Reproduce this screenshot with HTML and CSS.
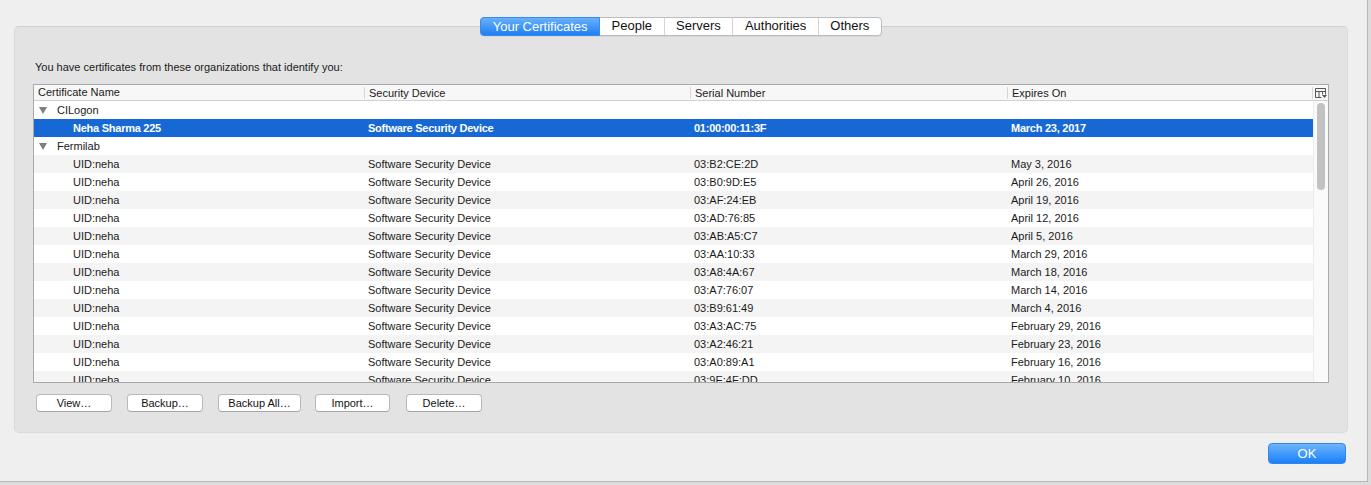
FILE: index.html
```html
<!DOCTYPE html>
<html>
<head>
<meta charset="utf-8">
<link rel="stylesheet" href="styles.css">
</head>
<body>
<div class="window">
  <div class="tabs">
    <div class="tab active">Your Certificates</div>
    <div class="tab">People</div>
    <div class="tab">Servers</div>
    <div class="tab">Authorities</div>
    <div class="tab">Others</div>
  </div>
  <div class="panel">
    <p class="intro">You have certificates from these organizations that identify you:</p>
    <div class="table">
      <div class="thead">
        <div class="th">Certificate Name</div>
        <div class="th sep">Security Device</div>
        <div class="th sep">Serial Number</div>
        <div class="th sep">Expires On</div>
        <div class="th-icon">
          <svg width="13" height="12" viewBox="0 0 13 12"><path d="M1.5 1.5h10v6M1.5 1.5v9h6M1.5 4.5h10M5 4.5v6M8.5 4.5v3" fill="none" stroke="#555" stroke-width="1"/><path d="M8 8h5l-2.5 3z" fill="#555"/></svg>
        </div>
      </div>
      <div class="tbody">
        <div class="rows">
          <div class="row group"><span class="tri"></span>CILogon</div>
          <div class="row selected"><div class="c1">Neha Sharma 225</div><div>Software Security Device</div><div>01:00:00:11:3F</div><div>March 23, 2017</div></div>
          <div class="row group"><span class="tri"></span>Fermilab</div>
          <div class="row"><div class="c1">UID:neha</div><div>Software Security Device</div><div>03:B2:CE:2D</div><div>May 3, 2016</div></div>
          <div class="row"><div class="c1">UID:neha</div><div>Software Security Device</div><div>03:B0:9D:E5</div><div>April 26, 2016</div></div>
          <div class="row"><div class="c1">UID:neha</div><div>Software Security Device</div><div>03:AF:24:EB</div><div>April 19, 2016</div></div>
          <div class="row"><div class="c1">UID:neha</div><div>Software Security Device</div><div>03:AD:76:85</div><div>April 12, 2016</div></div>
          <div class="row"><div class="c1">UID:neha</div><div>Software Security Device</div><div>03:AB:A5:C7</div><div>April 5, 2016</div></div>
          <div class="row"><div class="c1">UID:neha</div><div>Software Security Device</div><div>03:AA:10:33</div><div>March 29, 2016</div></div>
          <div class="row"><div class="c1">UID:neha</div><div>Software Security Device</div><div>03:A8:4A:67</div><div>March 18, 2016</div></div>
          <div class="row"><div class="c1">UID:neha</div><div>Software Security Device</div><div>03:A7:76:07</div><div>March 14, 2016</div></div>
          <div class="row"><div class="c1">UID:neha</div><div>Software Security Device</div><div>03:B9:61:49</div><div>March 4, 2016</div></div>
          <div class="row"><div class="c1">UID:neha</div><div>Software Security Device</div><div>03:A3:AC:75</div><div>February 29, 2016</div></div>
          <div class="row"><div class="c1">UID:neha</div><div>Software Security Device</div><div>03:A2:46:21</div><div>February 23, 2016</div></div>
          <div class="row"><div class="c1">UID:neha</div><div>Software Security Device</div><div>03:A0:89:A1</div><div>February 16, 2016</div></div>
          <div class="row"><div class="c1">UID:neha</div><div>Software Security Device</div><div>03:9E:4F:DD</div><div>February 10, 2016</div></div>
        </div>
        <div class="scrollbar"><div class="thumb"></div></div>
      </div>
    </div>
    <div class="buttons">
      <button class="btn w76">View…</button>
      <button class="btn w76">Backup…</button>
      <button class="btn w83">Backup All…</button>
      <button class="btn w76">Import…</button>
      <button class="btn w76">Delete…</button>
    </div>
  </div>
  <div class="footer">
    <button class="ok">OK</button>
  </div>
</div>
</body>
</html>
```
FILE: styles.css
```css
* { box-sizing: border-box; }
html, body { margin: 0; padding: 0; }
body {
  background: #dcdcdc;
  font-family: "Liberation Sans", Arial, sans-serif;
  color: #1a1a1a;
  width: 1371px;
  height: 485px;
  overflow: hidden;
}
.window {
  width: 1368px;
  height: 482px;
  background: #efefef;
  border-right: 1px solid #b8b8b8;
  border-bottom: 1px solid #b8b8b8;
  padding: 17px 19px 0 14px;
  display: flex;
  flex-direction: column;
}
.tabs {
  display: flex;
  align-self: center;
  height: 19px;
  position: relative;
  z-index: 1;
  border: 1px solid #bdbdbd;
  border-radius: 4px;
  background: #fff;
  box-shadow: 0 1px 0 rgba(0,0,0,0.05);
}
.tab {
  font-size: 13px;
  line-height: 16px;
  padding: 0 11.5px;
  color: #111;
  border-left: 1px solid #d4d4d4;
}
.tab:first-child { border-left: none; }
.tab.active {
  background: linear-gradient(#68b1fb, #1f80f4);
  color: #fff;
  margin: -1px 0 -1px -1px;
  padding: 1px 11.5px 0 11.5px;
  border-radius: 4px 0 0 4px;
  line-height: 16px;
  height: 19px;
  border: 1px solid #3a89ee;
}
.tab.active + .tab { border-left: none; }
.panel {
  margin-top: -10px;
  height: 407px;
  background: #e3e3e3;
  border: 1px solid #dadada;
  border-top-color: #cfcfcf;
  border-radius: 5px;
  padding: 0 18px 0 18px;
  display: flex;
  flex-direction: column;
}
.intro {
  margin: 33px 0 0 2px;
  font-size: 11px;
  line-height: 14px;
  height: 14px;
}
.table {
  margin-top: 10px;
  height: 299px;
  border: 1px solid #a9a9a9;
  background: #fff;
  display: flex;
  flex-direction: column;
  font-size: 11px;
}
.thead {
  height: 16px;
  flex: none;
  display: grid;
  grid-template-columns: 330px 326px 317px 1fr 16px;
  border-bottom: 1px solid #d0d0d0;
  background: #f7f7f7;
  line-height: 15px;
}
.th { padding-left: 4px; position: relative; }
.th.sep { border-left: 1px solid #d6d6d6; margin: 2px 0 1px; line-height: 12px; padding-left: 4px; }
.th:first-child { line-height: 15px; }
.th-icon { display: flex; align-items: center; justify-content: center; border-left: 1px solid #d6d6d6; margin: 2px 0 1px; }
.tbody {
  flex: 1;
  display: flex;
  overflow: hidden;
}
.rows { flex: 1; overflow: hidden; }
.row {
  height: 18px;
  line-height: 18px;
  display: grid;
  grid-template-columns: 330px 326px 317px 1fr;
  white-space: nowrap;
}
.row > div { padding-left: 4px; }
.row > .c1 { padding-left: 39px; }
.row:nth-child(even) { background: #f4f4f4; }
.row.group { display: flex; align-items: center; padding-left: 5px; }
.tri {
  width: 0; height: 0;
  border-left: 4px solid transparent;
  border-right: 4px solid transparent;
  border-top: 7px solid #7e7e7e;
  margin-right: 10px;
}
.row.selected {
  background: #1669d5;
  color: #fff;
  font-weight: bold;
  letter-spacing: -0.25px;
}
.scrollbar {
  width: 15px;
  flex: none;
  background: #fafafa;
  border-left: 1px solid #ececec;
  padding: 2px 3px;
}
.thumb {
  width: 8px;
  height: 87px;
  border-radius: 4px;
  background: #c2c2c2;
}
.buttons {
  display: flex;
  margin-top: 11px;
  padding-left: 3px;
}
.btn {
  font-family: "Liberation Sans", Arial, sans-serif;
  font-size: 11px;
  height: 18px;
  line-height: 15px;
  padding: 0;
  background: #fff;
  border: 1px solid #b9b9b9;
  border-bottom-color: #a6a6a6;
  border-radius: 4px;
  color: #111;
  margin-right: 15px;
}
.btn.w76 { width: 76px; }
.btn.w83 { width: 83px; }
.btn:nth-child(4) { width: 75px; margin-right: 16px; }
.btn:nth-child(3) { margin-right: 14px; }
.footer {
  display: flex;
  justify-content: flex-end;
  margin-top: 10px;
  padding-right: 2px;
}
.ok {
  font-family: "Liberation Sans", Arial, sans-serif;
  width: 78px;
  height: 21px;
  font-size: 13px;
  color: #fff;
  background: linear-gradient(#6db4fb, #1a80fb);
  border: 1px solid #3584ec;
  border-radius: 4px;
  padding: 0;
  line-height: 19px;
}
```
